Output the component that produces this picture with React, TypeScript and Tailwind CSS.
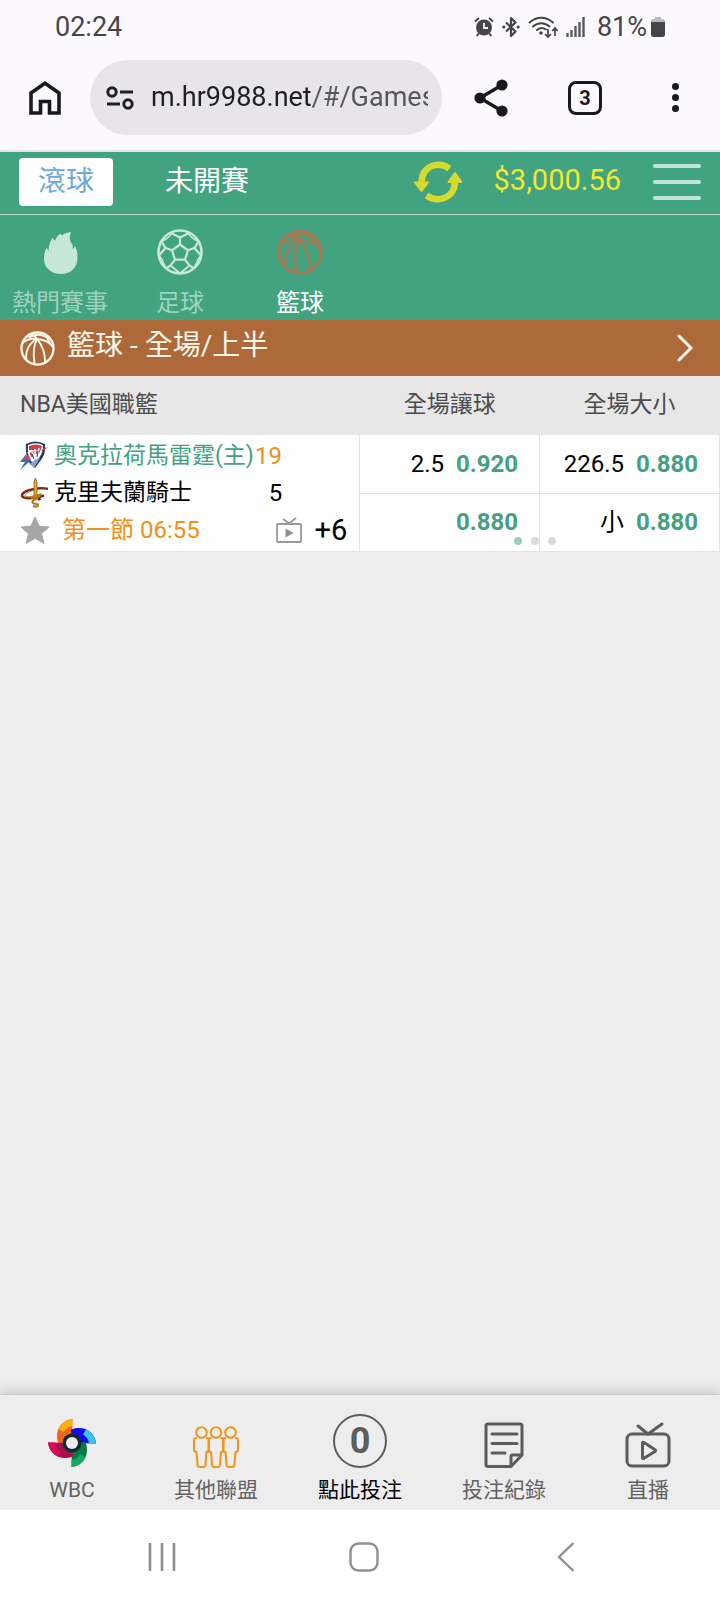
import React, { useState } from "react";

const ROBOTO = "font-[Roboto,'Noto_Sans_CJK_TC',sans-serif]";

type IconProps = {
  className?: string;
};

const AlarmIcon = () => (
  <svg viewBox="0 0 20 20" className="w-5 h-5" aria-hidden="true">
    <circle cx="10" cy="10.5" r="8" fill="#454547" />
    <path d="M10 6v5h4" stroke="#fbf9ff" strokeWidth="1.8" fill="none" />
    <path
      d="M1 4.5 5 1M19 4.5 15 1M4.500 16.500 2.800 19M15.500 16.500 17.200 19"
      stroke="#454547"
      strokeWidth="2"
      fill="none"
    />
  </svg>
);

const BluetoothIcon = () => (
  <svg viewBox="0 0 18 22" className="w-[18px] h-[22px]" aria-hidden="true">
    <path
      d="m4 6.500 9.500 9L9 20V2l4.500 4.500-9.500 9"
      stroke="#454547"
      strokeWidth="2.200"
      fill="none"
      strokeLinejoin="round"
    />
    <circle cx="1.800" cy="11" r="1.600" fill="#454547" />
    <circle cx="16.200" cy="11" r="1.600" fill="#454547" />
  </svg>
);

const WifiIcon = () => (
  <svg viewBox="0 0 30 22" className="w-[30px] h-[22px]" aria-hidden="true">
    <g stroke="#454547" strokeWidth="2" fill="none" strokeLinecap="round">
      <path d="M1.500 6.500c7-6.500 16.500-6.500 23.500 0" />
      <path d="M5 10.500c5-4.500 11.500-4.500 16.500 0" />
      <path d="M9 14c3-2.500 6-2.500 9-.5" />
    </g>
    <circle cx="13" cy="17" r="1.800" fill="#454547" />
    <path
      d="M20 13v8m-3-3 3 3 3-3M27 20v-8m-2.800 3 2.800-3 2.800 3"
      stroke="#454547"
      strokeWidth="1.700"
      fill="none"
    />
  </svg>
);

const SignalIcon = () => (
  <svg viewBox="0 0 19 20" className="w-[19px] h-5" aria-hidden="true">
    <path
      d="M1.500 16v4M5.500 13v7M9.500 9v11M13.500 5v15M17.500 0v20"
      stroke="#58585a"
      strokeWidth="2.400"
    />
  </svg>
);

const BatteryIcon = () => (
  <svg viewBox="0 0 14 20" className="w-[14px] h-5" aria-hidden="true">
    <path d="M4 0h6v2h2.500L14 3.500V6H0V3.500L1.500 2H4z" fill="#b9b8bc" />
    <path d="M0 5h14v12.500q0 2.500-2.500 2.500h-9Q0 20 0 17.500z" fill="#454547" />
  </svg>
);

const HomeIcon = () => (
  <svg viewBox="0 0 32 34" className="w-8 h-[34px]" aria-hidden="true">
    <path
      d="M2 32V12L16 2.300 30 12v20H20.500V20.500h-9V32z"
      stroke="#1a1a1e"
      strokeWidth="3.600"
      fill="none"
    />
  </svg>
);

const TuneIcon = () => (
  <svg viewBox="0 0 28 24" className="w-7 h-6 shrink-0" aria-hidden="true">
    <g stroke="#1f1f23" strokeWidth="3" fill="none">
      <circle cx="6" cy="6" r="4.200" />
      <circle cx="22" cy="18" r="4.200" />
      <path d="M14 6h13M1 18h13" />
    </g>
  </svg>
);

const ShareIcon = () => (
  <svg viewBox="0 0 34 38" className="w-[34px] h-[38px]" aria-hidden="true">
    <path d="M28 6 6 19l22 13" stroke="#1a1a1e" strokeWidth="3.500" fill="none" />
    <circle cx="28" cy="6" r="5.600" fill="#1a1a1e" />
    <circle cx="6" cy="19" r="5.600" fill="#1a1a1e" />
    <circle cx="28" cy="32" r="5.600" fill="#1a1a1e" />
  </svg>
);

const FlameIcon = ({ className }: IconProps) => (
  <svg viewBox="0 0 46 46" className={className} aria-hidden="true">
    <path
      d="M34 3c-2 5-1.500 8 .5 11 1.300 2 1.500 4 1 6 1.200-.6 2-1.600 2.500-3 2.300 4 2.600 8 2.400 13-.4 9-7.400 15-16.400 15S7 39.500 7 30c0-5 1-8.500 3-11.500.2 1.500.7 2.500 1.600 3.200C12 16 13 12 16 8.500c.3 1.500 1 2.500 2 3.300C19.500 7.500 22 5 24 4.500c-.3 1 0 1.500.8 2C26.500 4.500 30 3.500 34 3z"
      fill="currentColor"
    />
  </svg>
);

const SoccerIcon = ({ className }: IconProps) => (
  <svg viewBox="0 0 46 46" className={className} aria-hidden="true">
    <g stroke="currentColor" strokeWidth="2.200" fill="none" strokeLinejoin="round">
      <circle cx="23" cy="23" r="21.500" strokeWidth="2.600" />
      <path d="m23 15.500 8 5.800-3 9.400H18l-3-9.400z" />
      <path d="M23 15.500V8.500M31 21.300l6.500-2.300M28 30.700l4.500 5.800M18 30.700l-4.500 5.800M15 21.300 8.500 19" />
      <path d="m15 4.500 8 4 8-4M41.500 12.500l-4 6.500 6.500 7.500M37 39.500l-4.500-3L23 44.500M9 39.500l4.500-3L23 44.500M2 26.500 8.500 19l-4-6.500" />
      <path
        d="m31 4.500 5 5 5.500 3M15 4.500l-5 5-5.500 3M44 26.500l-3 4-4 9M2 26.500l3 4 4 9"
        strokeWidth="1.500"
      />
    </g>
  </svg>
);

const BasketballIcon = ({ className }: IconProps) => (
  <svg viewBox="0 0 48 48" className={className} aria-hidden="true">
    <g stroke="currentColor" strokeWidth="2.600" fill="none" strokeLinecap="round">
      <circle cx="24" cy="24" r="22" strokeWidth="3.200" />
      <path d="M14 4.500c4 1 7.500 3.300 9.500 6.500" />
      <path d="M3 17c6-5.500 14-7 20.500-6 8 .8 15.500 3.500 21 9" />
      <path d="M8.500 39c-1-12 4.500-23.500 15-28" />
      <path d="M23.500 11c-5 8-5.500 22-3.500 34.500" />
      <path d="M23.500 11c7 8.500 11 20 11 32.500" />
      <path d="M13 8.500c9-5 18-3.500 24 .5 2 5.500 5 10 7.500 12.500" />
    </g>
  </svg>
);

const RefreshIcon = () => (
  <svg viewBox="0 0 48 42" className="w-12 h-[42px]" aria-hidden="true">
    <g stroke="currentColor" strokeWidth="6.400" fill="none">
      <path d="M35.500 7.500C24-.5 7.500 5 7.500 22" />
      <path d="M12.500 34.500C24 42.500 41 37 41 20" />
    </g>
    <path
      d="M1 21.500h13L7.500 30zM34.500 21h13L41 12z"
      fill="currentColor"
      stroke="currentColor"
      strokeWidth="2"
      strokeLinejoin="round"
    />
  </svg>
);

const ThunderLogo = () => (
  <svg viewBox="0 0 30 30" className="w-[30px] h-[30px]" aria-hidden="true">
    <path d="M6 3q9-5 19 0 1 10-4 16l-6 8-5-4q-5-9-4-20z" fill="#1f3b6e" />
    <path d="M8 4q8-3.500 15 0 0 8-4 13l-5 7-3-4Q7 12 8 4z" fill="#fff" />
    <path d="M9 5q7-3 13 0l-1 4H9z" fill="#d93a3e" />
    <path d="M0 21 7 12l-1 5 8-6-5 10-9 8 5-8z" fill="#3b6db5" />
    <path d="m2 19 9-8 18-5-7 4-13 8z" fill="#d4474c" />
    <path d="m8 11 4 8m-1-10 4 8m0-9v8m4-9-2 8m5-8-2 6" stroke="#fff" strokeWidth="1.500" />
    <path d="m12 13 2 5m4-8-1 6" stroke="#1f3b6e" />
    <path d="m10 23 6-5 4-1-6 10z" fill="#8aa0c4" />
  </svg>
);

const CavaliersLogo = () => (
  <svg viewBox="0 0 30 30" className="w-[30px] h-[30px]" aria-hidden="true">
    <path
      d="M28 11C20 9 2 12 2 17.500c0 3 8 4 22 0"
      stroke="#7a2a20"
      strokeWidth="2.600"
      fill="none"
    />
    <path d="M26 11.500c-8-1-21 2.500-21 6 0 1.500 6 2 12 1" stroke="#c98a2c" fill="none" />
    <path d="M14 4 15.500 0 17 4v17h-3z" fill="#e8aa26" stroke="#8a5a1a" strokeWidth=".8" />
    <path d="M9 18.500 22 15l-2 4-8 2z" fill="#b8781f" />
    <path
      d="M20 21c-5-1-9 2-7 4 1 1.500 5 0 5 2s-3 2-5 1"
      stroke="#b07a24"
      strokeWidth="2.200"
      fill="none"
    />
    <path d="m19 20 3 1-4 2z" fill="#4b1522" />
  </svg>
);

const StarIcon = () => (
  <svg viewBox="0 0 30 28" className="w-[30px] h-7" aria-hidden="true">
    <path
      d="m15 1 4 9 10 1-7.500 6.700L24 27.500l-9-5.200-9 5.200 2.500-9.800L1 11l10-1z"
      fill="#a7a7a7"
      stroke="#a7a7a7"
      strokeLinejoin="round"
    />
  </svg>
);

const SmallTvIcon = () => (
  <svg viewBox="0 0 26 26" className="w-[26px] h-[26px]" aria-hidden="true">
    <g stroke="#999" strokeWidth="1.800" fill="none">
      <rect x="1" y="7" width="24" height="18" rx="1" />
      <path d="m7 2 6 4.500L20 1" />
    </g>
    <path d="M9.500 11.500v9l8-4.500z" fill="#8e8e8e" />
  </svg>
);

const PinwheelLogo = () => (
  <svg viewBox="0 0 48 50" className="w-12 h-[50px]" aria-hidden="true">
    {[
      ["#f0641e", "#ffae10", "0"],
      ["#1208e8", "#35c8ea", "90"],
      ["#0a7a45", "#14a862", "180"],
      ["#a80f4e", "#d80d58", "270"],
    ].map(([inner, outer, angle]) => (
      <g key={angle} transform={`rotate(${angle} 24 25)`}>
        <path d="M24.500 1C15 2 9 9 9 18c0 3 .5 6 2 8l13-1z" fill={inner} />
        <path d="M24.500 1C18 2 13 5.500 10.500 11l5 3c2-3.500 5-5.500 9-6z" fill={outer} />
      </g>
    ))}
    <circle cx="24" cy="25" r="9.500" fill="#0f2d30" />
    <circle cx="24" cy="25" r="6" fill="#ededed" />
  </svg>
);

const PeopleIcon = () => (
  <svg viewBox="0 0 46 42" className="w-[46px] h-[42px]" aria-hidden="true">
    <g stroke="#ee981f" strokeWidth="2.100" fill="none" strokeLinejoin="round">
      {["0", "14.500", "29"].map((x) => (
        <g key={x} transform={`translate(${x} 0)`}>
          <circle cx="8.500" cy="6.500" r="5.300" />
          <path d="M4 12H3q-2 0-2 2v10.500q0 1.500 2.600 1.500L4.500 39q.2 2 2 2h4q1.800 0 2-2l.9-13q2.600 0 2.600-1.500V14q0-2-2-2h-1" />
        </g>
      ))}
    </g>
  </svg>
);

const RecordIcon = () => (
  <svg viewBox="0 0 40 46" className="w-10 h-[46px]" aria-hidden="true">
    <g
      stroke="#5c5c5c"
      strokeWidth="3"
      fill="none"
      strokeLinecap="round"
      strokeLinejoin="round"
    >
      <path d="M27 44.500H4q-2 0-2-2V4q0-2 2-2h32q2 0 2 2v29z" />
      <path d="M27 44v-9.500q0-1.500 1.500-1.500H37" />
      <path d="M8 12h25M8 21.500h25M8 31h13" />
    </g>
  </svg>
);

const LiveIcon = () => (
  <svg viewBox="0 0 46 46" className="w-[46px] h-[46px]" aria-hidden="true">
    <g
      stroke="#5c5c5c"
      strokeWidth="3"
      fill="none"
      strokeLinejoin="round"
      strokeLinecap="round"
    >
      <rect x="2" y="12" width="42" height="32" rx="5" />
      <path d="m13 4 10 8L37 2" />
      <path d="M17.500 21v14.500q0 1.500 1.500.8L30 29.500q1.200-.9 0-1.800L19 20.500q-1.500-.8-1.500.5z" />
    </g>
  </svg>
);

const StatusBar = () => (
  <div className="flex h-[54px] items-center justify-between px-[55px] text-[27px] text-[#454547]">
    <span>02:24</span>
    <div className="flex items-center gap-2">
      <AlarmIcon />
      <BluetoothIcon />
      <WifiIcon />
      <SignalIcon />
      <div className="flex items-center gap-1 pl-1">
        <span>81%</span>
        <BatteryIcon />
      </div>
    </div>
  </div>
);

const BrowserBar = () => (
  <div className="flex items-center border-b-2 border-[#e3e4ea] pt-[6px] pb-[15px]">
    <button className="flex w-[90px] justify-center" aria-label="Home">
      <HomeIcon />
    </button>
    <div className="flex h-[75px] min-w-0 flex-1 items-center gap-[17px] rounded-full bg-[#e7e5eb] pl-4 pr-[14px]">
      <TuneIcon />
      <input
        type="text"
        aria-label="Address"
        defaultValue="m.hr9988.net/#/Games"
        className="min-w-0 flex-1 bg-[linear-gradient(to_right,#1f1f23_162px,#55555b_162px)] bg-clip-text text-[27px] text-transparent outline-none"
      />
    </div>
    <div className="flex">
      <button className="flex w-[98px] items-center justify-center" aria-label="Share">
        <ShareIcon />
      </button>
      <button className="flex w-[90px] items-center justify-center" aria-label="Tabs">
        <span className="flex h-[34px] w-[34px] items-center justify-center rounded-lg border-3 border-[#1a1a1e] text-xl font-bold text-[#1a1a1e]">
          3
        </span>
      </button>
      <button className="flex w-[90px] flex-col items-center justify-center gap-1" aria-label="Menu">
        <span className="h-[7px] w-[7px] rounded-full bg-[#1a1a1e]" />
        <span className="h-[7px] w-[7px] rounded-full bg-[#1a1a1e]" />
        <span className="h-[7px] w-[7px] rounded-full bg-[#1a1a1e]" />
      </button>
    </div>
  </div>
);

const sports = [
  { name: "熱門賽事", Icon: FlameIcon, color: "text-[#c6e7da]" },
  { name: "足球", Icon: SoccerIcon, color: "text-[#c6e7da]" },
  { name: "籃球", Icon: BasketballIcon, color: "text-[#a07a54]" },
];

const Header = () => {
  const [sport, setSport] = useState("籃球");
  return (
    <header className="bg-[#41a380] text-white">
      <div className="flex items-center justify-between border-b border-[#b5dccd] px-[19px] pt-[6px] pb-2">
        <div className="flex items-center gap-8 text-[28px]">
          <button className="h-12 w-[94px] rounded bg-white text-[#6fa8dc]">滾球</button>
          <button className="h-12 px-5">未開賽</button>
        </div>
        <div className="flex items-center gap-8">
          <button className="text-[#d6da2e]" aria-label="Refresh">
            <RefreshIcon />
          </button>
          <span className="pb-1 text-[29px] leading-9 text-[#f2e82c]">$3,000.56</span>
          <button className="flex w-12 flex-col gap-3" aria-label="Menu">
            <span className="h-1 w-full rounded-full bg-[#c3e4d8]" />
            <span className="h-1 w-full rounded-full bg-[#c3e4d8]" />
            <span className="h-1 w-full rounded-full bg-[#c3e4d8]" />
          </button>
        </div>
      </div>
      <nav className="flex pt-[14px]">
        {sports.map(({ name, Icon, color }) => (
          <button
            key={name}
            onClick={() => setSport(name)}
            className="flex w-[120px] flex-col items-center gap-3"
          >
            <span className={color}>
              <Icon className="h-[46px] w-[46px]" />
            </span>
            <span
              className={`text-[24px] leading-[33px] ${
                sport === name ? "text-white" : "text-[#9fd3bf]"
              }`}
            >
              {name}
            </span>
          </button>
        ))}
      </nav>
    </header>
  );
};

const Odds = ({ label, value }: { label?: string; value: string }) => (
  <td className="h-[58px] border border-t-0 border-[#e4e4e4] p-0">
    <button className="flex w-full items-center justify-end gap-3 pr-[21px] text-[24px] leading-8">
      <span className="text-black">{label}</span>
      <span className="font-bold text-[#45a07f]">{value}</span>
    </button>
  </td>
);

const GameTable = () => (
  <div className="relative">
    <table className="w-full table-fixed border-collapse bg-white">
      <thead>
        <tr className="h-[59px] bg-[#e7e7e7] text-[23px] text-[#4c4c4c]">
          <th className="w-1/2 p-0 pl-5 text-left font-normal">NBA美國職籃</th>
          <th className="w-1/4 p-0 font-normal">全場讓球</th>
          <th className="w-1/4 p-0 font-normal">全場大小</th>
        </tr>
      </thead>
      <tbody>
        <tr>
          <td rowSpan={2} className="border-b border-[#e4e4e4] p-0 align-middle">
            <div className="flex h-[37px] items-center gap-1 pl-5 text-[23px] text-[#41a380]">
              <ThunderLogo />
              <span className="w-[197px] whitespace-nowrap">奧克拉荷馬雷霆(主)</span>
              <span className="text-[24px] text-[#f29018]">19</span>
            </div>
            <div className="flex h-[37px] items-center gap-1 pl-5 pr-[77px] text-[23px] text-black">
              <CavaliersLogo />
              <span className="flex-1">克里夫蘭騎士</span>
              <span className="text-[24px]">5</span>
            </div>
            <div className="flex h-[37px] items-center gap-3 pl-5 pr-3">
              <button aria-label="Favorite">
                <StarIcon />
              </button>
              <span className="flex-1 text-[24px] text-[#f29018]">第一節 06:55</span>
              <button aria-label="Live">
                <SmallTvIcon />
              </button>
              <button className="text-[29px] leading-8 text-black">+6</button>
            </div>
          </td>
          <Odds label="2.5" value="0.920" />
          <Odds label="226.5" value="0.880" />
        </tr>
        <tr>
          <Odds value="0.880" />
          <Odds label="小" value="0.880" />
        </tr>
      </tbody>
    </table>
    <div className="absolute bottom-[7px] left-3/4 flex -translate-x-[26px] gap-[9px]">
      <span className="h-2 w-2 rounded-full bg-[#9bcfba]" />
      <span className="h-2 w-2 rounded-full bg-[#dadada]" />
      <span className="h-2 w-2 rounded-full bg-[#dadada]" />
    </div>
  </div>
);

const BetCount = () => (
  <span className="flex h-[54px] w-[54px] items-center justify-center rounded-full border-2 border-[#5c5c5c] text-[36px] font-bold leading-none text-[#5c5c5c]">
    0
  </span>
);

const navItems = [
  { label: "WBC", icon: <PinwheelLogo /> },
  { label: "其他聯盟", icon: <PeopleIcon /> },
  { label: "點此投注", icon: <BetCount />, active: true },
  { label: "投注紀錄", icon: <RecordIcon /> },
  { label: "直播", icon: <LiveIcon /> },
];

const BottomNav = () => (
  <nav className="grid grid-cols-5 border-t border-[#cbcbcb] bg-[#ededed] pt-5 pb-1 shadow-[0_0_14px_rgba(0,0,0,0.22)]">
    {navItems.map(({ label, icon, active }) => (
      <a
        key={label}
        href="#"
        className={`flex flex-col items-center text-[21px] leading-8 ${
          active ? "text-black" : "text-[#626262]"
        }`}
      >
        <span className="flex h-[59px] items-end pb-[6px]">{icon}</span>
        {label}
      </a>
    ))}
  </nav>
);

const SystemNav = () => (
  <div className="relative grid h-[90px] grid-cols-3 items-center justify-items-center bg-white pl-[61px] pr-[53px] pt-1">
    <button aria-label="Recents">
      <svg viewBox="0 0 28 30" className="h-[30px] w-7" aria-hidden="true">
        <path d="M2 1v28M14 1v28M26 1v28" stroke="#8f8f8f" strokeWidth="2.600" />
      </svg>
    </button>
    <button aria-label="Home screen">
      <svg viewBox="0 0 30 30" className="h-[30px] w-[30px]" aria-hidden="true">
        <rect
          x="1.500"
          y="1.500"
          width="27"
          height="27"
          rx="8"
          stroke="#8f8f8f"
          strokeWidth="2.400"
          fill="none"
        />
      </svg>
    </button>
    <button aria-label="Back">
      <svg viewBox="0 0 18 30" className="h-[30px] w-[18px]" aria-hidden="true">
        <path d="M16.500 1 2 15l14.500 14" stroke="#8f8f8f" strokeWidth="2.400" fill="none" />
      </svg>
    </button>
  </div>
);

const App = () => {
  return (
    <div className={`flex min-h-screen flex-col bg-[#ededed] ${ROBOTO}`}>
      <div className="bg-[#fbf9ff]">
        <StatusBar />
        <BrowserBar />
      </div>
      <Header />
      <main className="flex-1">
        <button className="flex h-14 w-full items-center gap-3 bg-[#ae693b] pl-5 pr-[27px] text-[28px] text-[#fff8ea]">
          <BasketballIcon className="h-[35px] w-[35px]" />
          <span className="flex-1 pb-1 text-left leading-8">籃球 - 全場/上半</span>
          <svg viewBox="0 0 16 28" className="h-7 w-4" aria-hidden="true">
            <path
              d="m2 2 12 12L2 26"
              stroke="currentColor"
              strokeWidth="3"
              fill="none"
              strokeLinecap="round"
            />
          </svg>
        </button>
        <GameTable />
      </main>
      <BottomNav />
      <SystemNav />
    </div>
  );
};

export default App;
